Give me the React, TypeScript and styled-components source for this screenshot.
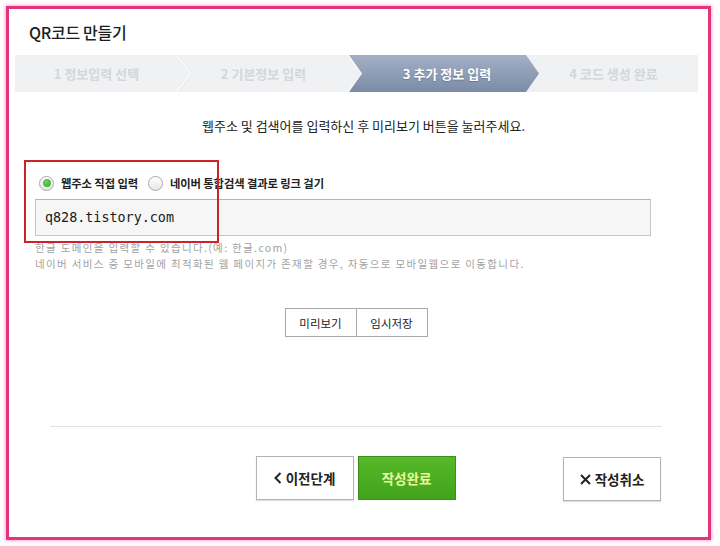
import styled, { createGlobalStyle } from "styled-components";

const GlobalStyle = createGlobalStyle`
  body {
    margin: 0;
    background: #ffffff;
    font-family: "Noto Sans CJK KR", "Noto Sans", sans-serif;
  }
`;

const Page = styled.div`
  width: 720px;
  height: 546px;
  padding: 6px;
  box-sizing: border-box;
`;

const Frame = styled.div`
  width: 705px;
  height: 534px;
  box-sizing: border-box;
  border: 3px solid #e4347e;
  box-shadow: 0 0 3px 1px rgba(245, 110, 190, 0.55);
  background: #fff;
  display: flex;
  flex-direction: column;
`;

const Header = styled.div`
  height: 46px;
  display: flex;
  align-items: center;
  padding-left: 20px;
  font-size: 16px;
  font-weight: 500;
  color: #1d1d1d;
  letter-spacing: -0.3px;
`;

const StepBar = styled.div`
  display: flex;
  height: 37px;
  margin: 0 10px 0 6px;
  background: #f0f1f3;
`;

const Step = styled.div<{ $width?: number; $active?: boolean }>`
  position: relative;
  flex: ${(p) => (p.$width ? `0 0 ${p.$width}px` : "1")};
  display: flex;
  align-items: center;
  justify-content: center;
  font-size: 13px;
  font-weight: 700;
  color: ${(p) => (p.$active ? "#ffffff" : "#d4d6da")};
  ${(p) =>
    p.$active &&
    `
    margin-right: -13px;
    padding-left: 6px;
    background: linear-gradient(#a3b0c4, #7b8ca7);
    clip-path: polygon(0 0, calc(100% - 13px) 0, 100% 50%, calc(100% - 13px) 100%, 0 100%, 13px 50%);
    text-shadow: 0 1px 1px rgba(60, 70, 90, 0.35);
  `}
`;

const StepLast = styled(Step)`
  padding-left: 3px;
`;

const Chevron = styled.svg`
  position: absolute;
  left: 100%;
  top: 0;
  overflow: visible;
`;

const StepChevron = () => (
  <Chevron width="15" height="37" viewBox="0 0 15 37">
    <polyline points="0,0 14,18.5 0,37" fill="none" stroke="#dcdee2" strokeWidth="1" />
    <polyline points="-1,0 13,18.5 -1,37" fill="none" stroke="#ffffff" strokeWidth="1.2" />
  </Chevron>
);

const Notice = styled.p`
  margin: 26px 0 0;
  line-height: 16px;
  font-size: 13px;
  text-align: center;
  color: #222;
  padding-left: 10px;
`;

const FormArea = styled.div`
  position: relative;
  margin: 40px 57px 0 26px;
`;

const Highlight = styled.div`
  position: absolute;
  left: -11px;
  top: -14px;
  width: 195px;
  height: 83px;
  box-sizing: border-box;
  border: 2px solid #cc2329;
  pointer-events: none;
`;

const RadioRow = styled.div`
  display: flex;
  align-items: center;
  height: 18px;
  padding-left: 4px;
`;

const RadioLabel = styled.label`
  display: flex;
  align-items: center;
  gap: 7px;
  margin-right: 10px;
  font-size: 11.3px;
  font-weight: 700;
  color: #222;
  letter-spacing: -0.1px;
`;

const RadioDot = styled.span<{ $checked?: boolean }>`
  width: 15px;
  height: 15px;
  box-sizing: border-box;
  border-radius: 50%;
  border: 1px solid #a9a9a9;
  background: linear-gradient(#ffffff, #e6e6e6);
  display: flex;
  align-items: center;
  justify-content: center;
  &::after {
    content: "";
    display: ${(p) => (p.$checked ? "block" : "none")};
    width: 8px;
    height: 8px;
    border-radius: 50%;
    background: radial-gradient(circle at 40% 35%, #6fd35f, #2fa52a);
  }
`;

const UrlInput = styled.div`
  margin-top: 7px;
  height: 37px;
  box-sizing: border-box;
  border: 1px solid #c6c6c6;
  border-top-color: #b5b5b5;
  background: #f6f6f6;
  display: flex;
  align-items: center;
  padding-left: 9px;
  font-family: "DejaVu Sans Mono", "Liberation Mono", monospace;
  font-size: 13.4px;
  color: #1a1a1a;
`;

const Hints = styled.div`
  margin-top: 4px;
  font-size: 10.5px;
  line-height: 15.5px;
  color: #a2a2a2;
  letter-spacing: 1.35px;
`;

const MiniGroup = styled.div`
  display: flex;
  justify-content: center;
  margin: 37px 46px 0 41px;
`;

const MiniButton = styled.button`
  width: 72px;
  height: 29px;
  box-sizing: border-box;
  border: 1px solid #a8a8a8;
  background: #fff;
  font-family: inherit;
  font-size: 11.5px;
  color: #222;
  padding: 0;
  & + & {
    margin-left: -1px;
  }
`;

const Divider = styled.hr`
  margin: 89px 46px 0 41px;
  border: 0;
  border-top: 1px solid #e2e2e2;
  height: 0;
`;

const Footer = styled.div`
  display: grid;
  grid-template-columns: 1fr auto 1fr;
  margin: 29px 47px 0 41px;
`;

const FooterMain = styled.div`
  grid-column: 2;
  display: flex;
  gap: 4px;
`;

const FooterSide = styled.div`
  grid-column: 3;
  display: flex;
  justify-content: flex-end;
  padding-top: 1px;
`;

const BigButton = styled.button<{ $primary?: boolean }>`
  width: 98px;
  height: 44px;
  box-sizing: border-box;
  padding: 0;
  display: flex;
  align-items: center;
  justify-content: center;
  gap: 4px;
  font-family: inherit;
  font-size: 13.5px;
  font-weight: 700;
  border: 1px solid ${(p) => (p.$primary ? "#3c8f1b" : "#b3b3b3")};
  background: ${(p) => (p.$primary ? "linear-gradient(#55b928, #42a31c)" : "#fff")};
  color: ${(p) => (p.$primary ? "#eef79c" : "#222")};
  box-shadow: ${(p) => (p.$primary ? "none" : "0 1px 1px rgba(0,0,0,0.12)")};
`;

const BtnIcon = styled.svg`
  flex: none;
`;

export default function App() {
  return (
    <Page>
      <GlobalStyle />
      <Frame>
        <Header>QR코드 만들기</Header>
        <StepBar>
          <Step $width={163}>
            1 정보입력 선택
            <StepChevron />
          </Step>
          <Step $width={171}>
            2 기본정보 입력
            <StepChevron />
          </Step>
          <Step $width={184} $active>
            3 추가 정보 입력
          </Step>
          <StepLast>4 코드 생성 완료</StepLast>
        </StepBar>

        <Notice>웹주소 및 검색어를 입력하신 후 미리보기 버튼을 눌러주세요.</Notice>

        <FormArea>
          <RadioRow>
            <RadioLabel>
              <RadioDot $checked />
              웹주소 직접 입력
            </RadioLabel>
            <RadioLabel>
              <RadioDot />
              네이버 통합검색 결과로 링크 걸기
            </RadioLabel>
          </RadioRow>
          <UrlInput>q828.tistory.com</UrlInput>
          <Hints>
            한글 도메인을 입력할 수 있습니다.(예: 한글.com)
            <br />
            네이버 서비스 중 모바일에 최적화된 웹 페이지가 존재할 경우, 자동으로 모바일웹으로 이동합니다.
          </Hints>
          <Highlight />
        </FormArea>

        <MiniGroup>
          <MiniButton>미리보기</MiniButton>
          <MiniButton>임시저장</MiniButton>
        </MiniGroup>

        <Divider />

        <Footer>
          <FooterMain>
            <BigButton>
              <BtnIcon width="8" height="12" viewBox="0 0 8 12">
                <polyline points="6.5,1 1.5,6 6.5,11" fill="none" stroke="#222" strokeWidth="2" />
              </BtnIcon>
              이전단계
            </BigButton>
            <BigButton $primary>작성완료</BigButton>
          </FooterMain>
          <FooterSide>
            <BigButton>
              <BtnIcon width="11" height="11" viewBox="0 0 11 11">
                <path d="M1 1 L10 10 M10 1 L1 10" stroke="#222" strokeWidth="2" />
              </BtnIcon>
              작성취소
            </BigButton>
          </FooterSide>
        </Footer>
      </Frame>
    </Page>
  );
}
